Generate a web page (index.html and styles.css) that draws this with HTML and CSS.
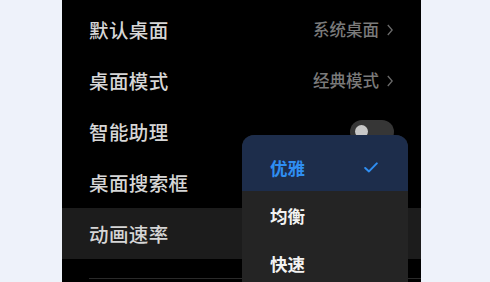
FILE: index.html
```html
<!DOCTYPE html>
<html lang="zh">
<head>
<meta charset="utf-8">
<link rel="stylesheet" href="styles.css">
</head>
<body>
<div class="page">
  <div class="panel">
    <div class="row">
      <span class="label">默认桌面</span>
      <span class="value">系统桌面<svg class="chev" viewBox="0 0 6 12" width="6" height="12"><path d="M0.8 1 L5.2 6 L0.8 11" fill="none" stroke="currentColor" stroke-width="1.3"/></svg></span>
    </div>
    <div class="row">
      <span class="label">桌面模式</span>
      <span class="value">经典模式<svg class="chev" viewBox="0 0 6 12" width="6" height="12"><path d="M0.8 1 L5.2 6 L0.8 11" fill="none" stroke="currentColor" stroke-width="1.3"/></svg></span>
    </div>
    <div class="row">
      <span class="label">智能助理</span>
      <span class="toggle"><span class="knob"></span></span>
    </div>
    <div class="row">
      <span class="label">桌面搜索框</span>
    </div>
    <div class="row active">
      <span class="label">动画速率</span>
    </div>
    <div class="divider"></div>

    <div class="menu">
      <div class="item selected">
        <span>优雅</span>
        <svg class="check" viewBox="0 0 14 11" width="14" height="11"><path d="M1.2 6 L5 9.4 L12.8 1.4" fill="none" stroke="currentColor" stroke-width="2" stroke-linecap="round" stroke-linejoin="round"/></svg>
      </div>
      <div class="item"><span>均衡</span></div>
      <div class="item"><span>快速</span></div>
    </div>
  </div>
</div>
</body>
</html>
```

FILE: styles.css
```css
* { box-sizing: border-box; }
html, body {
  margin: 0;
  padding: 0;
  width: 490px;
  height: 282px;
  overflow: hidden;
  background: #eef2fa;
  font-family: "Noto Sans CJK SC", "Noto Sans", sans-serif;
}
.page {
  display: flex;
  justify-content: flex-start;
  height: 282px;
  padding-left: 62px;
}
.panel {
  position: relative;
  width: 359px;
  height: 282px;
  background: #000;
  padding-top: 4px;
  display: flex;
  flex-direction: column;
}
.row {
  height: 51px;
  flex: 0 0 51px;
  display: flex;
  align-items: center;
  justify-content: space-between;
  padding: 0 27px 0 27px;
}
.row.active {
  background: #1c1c1c;
}
.label {
  font-size: 19.5px;
  font-weight: 500;
  color: #d6d6d6;
  letter-spacing: 0.4px;
  line-height: 1;
}
.value {
  display: flex;
  align-items: center;
  gap: 8px;
  font-size: 16.5px;
  font-weight: 500;
  color: #7a7a7a;
  line-height: 1;
  margin-right: 1px;
}
.chev { color: #6c6c6c; }
.toggle {
  position: relative;
  width: 44px;
  height: 24px;
  border-radius: 12px;
  background: #363636;
}
.knob {
  position: absolute;
  left: 5px;
  top: 5px;
  width: 13px;
  height: 13px;
  border-radius: 50%;
  background: #c8c8c8;
}
.divider {
  margin: 19px 0 0 27px;
  height: 1px;
  background: #2a2a2a;
}
.menu {
  position: absolute;
  left: 180px;
  top: 135px;
  width: 166px;
  background: #242424;
  border-radius: 12px 12px 0 0;
  overflow: hidden;
}
.item {
  height: 48px;
  display: flex;
  align-items: center;
  justify-content: space-between;
  padding: 0 30px 0 28px;
  font-size: 17.5px;
  font-weight: 700;
  color: #f2f2f2;
}
.item.selected {
  height: 56px;
  padding-top: 8px;
  background: #1d2d4b;
  color: #2f8ef2;
}
.check { color: #2f8ef2; }
```
